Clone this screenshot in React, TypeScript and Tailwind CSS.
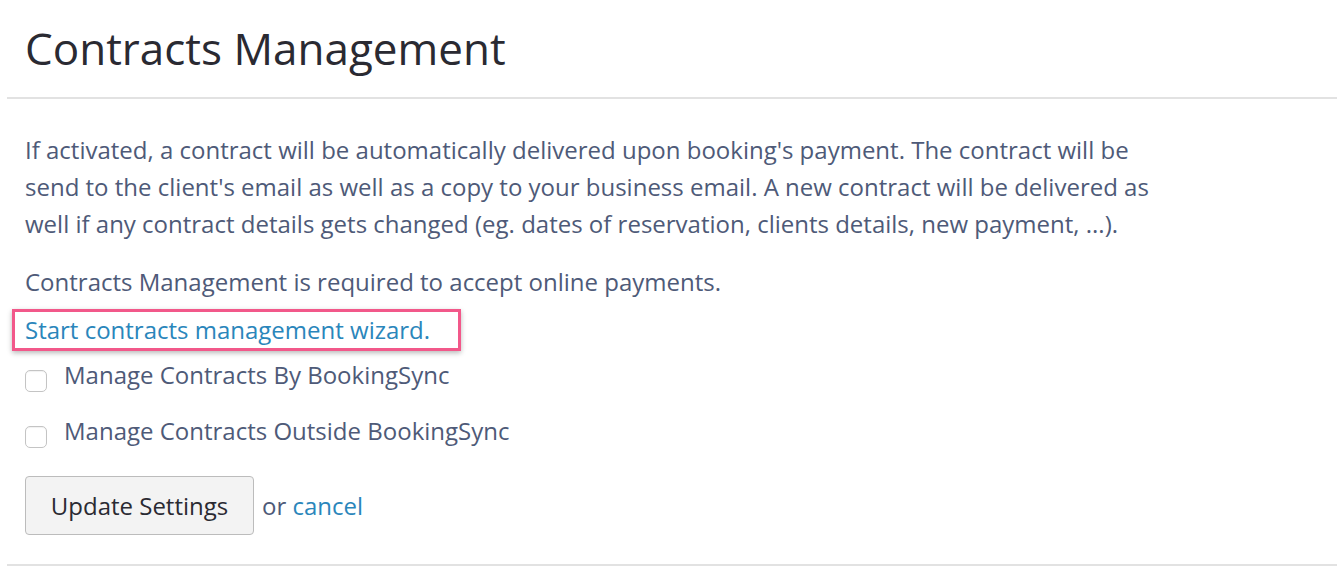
const BODY = { fontFamily: '"Open Sans", "Noto Sans", sans-serif' }

function Checkbox({ label }: { label: string }) {
  return (
    <label className="flex items-center gap-[17px]">
      <span className="mt-[13px] h-[22px] w-[22px] rounded-[5px] border border-[#c4c4c4] bg-white shadow-[inset_0_1px_1px_rgba(0,0,0,0.06)]" />
      <span className="text-[24px] leading-[37px] text-[#4e5a78]">{label}</span>
    </label>
  )
}

export default function App() {
  return (
    <div className="h-[566px] overflow-hidden bg-white" style={BODY}>
      <div className="pl-[7px]">
        <div className="border-b-2 border-[#e2e2e2] pb-[19px] pl-[18px] pt-[18px]">
          <h1 className="text-[44px] leading-[60px] text-[#2a2a32]">Contracts Management</h1>
        </div>
      </div>

      <div className="px-[25px] pt-[32px]">
        <p className="max-w-[1140px] text-[24px] leading-[37px] text-[#4e5a78]">
          If activated, a contract will be automatically delivered upon booking's payment. The contract will be send to
          the client's email as well as a copy to your business email. A new contract will be delivered as well if any
          contract details gets changed (eg. dates of reservation, clients details, new payment, ...).
        </p>
        <p className="mt-[21px] text-[24px] leading-[37px] text-[#4e5a78]">
          Contracts Management is required to accept online payments.
        </p>

        <div className="-ml-[13px] mt-[9px] w-[449px] border-[3px] border-[#f2588a] pl-[10px] shadow-[0_2px_5px_rgba(0,0,0,0.28)]">
          <a href="#" className="block text-[24px] leading-[36px] text-[#2a86bb]">
            Start contracts management wizard.
          </a>
        </div>

        <div className="mt-[5px] flex flex-col gap-[19px]">
          <Checkbox label="Manage Contracts By BookingSync" />
          <Checkbox label="Manage Contracts Outside BookingSync" />
        </div>

        <div className="mt-[27px] flex items-center gap-[8px]">
          <button className="h-[59px] w-[229px] rounded-[4px] border border-[#bcbcbc] bg-[#f3f3f3] text-[24px] text-[#2a2a32]">
            Update Settings
          </button>
          <span className="text-[24px] text-[#4e5a78]">
            or{' '}
            <a href="#" className="text-[#2a86bb]">
              cancel
            </a>
          </span>
        </div>
      </div>

      <div className="ml-[7px] mt-[29px] border-b-2 border-[#e2e2e2]" />
    </div>
  )
}
